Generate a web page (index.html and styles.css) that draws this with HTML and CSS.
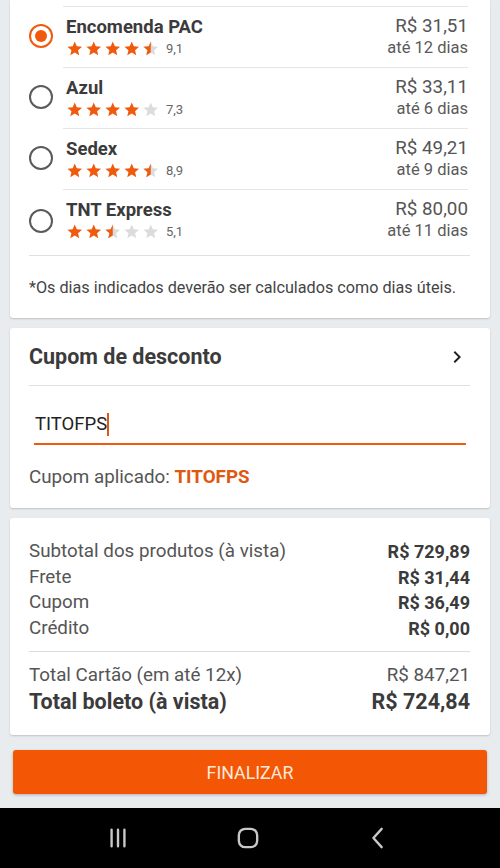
FILE: index.html
```html
<!DOCTYPE html>
<html lang="pt-BR">
<head>
<meta charset="utf-8">
<title>Checkout</title>
<link rel="stylesheet" href="styles.css">
</head>
<body>
<div class="page">
  <section class="card shipping">
    <div class="ship-row">
      <div class="radio-col"><span class="radio selected"></span></div>
      <div class="ship-body">
        <div class="ship-left">
          <div class="ship-name">Encomenda PAC</div>
          <div class="stars">
            <svg class="star" viewBox="0 0 24 24"><path class="on" d="M12 17.27L18.18 21l-1.64-7.03L22 9.24l-7.19-.61L12 2 9.19 8.63 2 9.24l5.46 4.73L5.82 21z"/></svg>
            <svg class="star" viewBox="0 0 24 24"><path class="on" d="M12 17.27L18.18 21l-1.64-7.03L22 9.24l-7.19-.61L12 2 9.19 8.63 2 9.24l5.46 4.73L5.82 21z"/></svg>
            <svg class="star" viewBox="0 0 24 24"><path class="on" d="M12 17.27L18.18 21l-1.64-7.03L22 9.24l-7.19-.61L12 2 9.19 8.63 2 9.24l5.46 4.73L5.82 21z"/></svg>
            <svg class="star" viewBox="0 0 24 24"><path class="on" d="M12 17.27L18.18 21l-1.64-7.03L22 9.24l-7.19-.61L12 2 9.19 8.63 2 9.24l5.46 4.73L5.82 21z"/></svg>
            <svg class="star" viewBox="0 0 24 24"><path class="off" d="M12 17.27L18.18 21l-1.64-7.03L22 9.24l-7.19-.61L12 2 9.19 8.63 2 9.24l5.46 4.73L5.82 21z"/><path class="on" d="M12 17.27L5.82 21l1.64-7.03L2 9.24l7.19-.61L12 2z"/></svg>
            <span class="score">9,1</span>
          </div>
        </div>
        <div class="ship-right">
          <div class="price">R$ 31,51</div>
          <div class="days">até 12 dias</div>
        </div>
      </div>
    </div>

    <div class="ship-row">
      <div class="radio-col"><span class="radio"></span></div>
      <div class="ship-body">
        <div class="ship-left">
          <div class="ship-name">Azul</div>
          <div class="stars">
            <svg class="star" viewBox="0 0 24 24"><path class="on" d="M12 17.27L18.18 21l-1.64-7.03L22 9.24l-7.19-.61L12 2 9.19 8.63 2 9.24l5.46 4.73L5.82 21z"/></svg>
            <svg class="star" viewBox="0 0 24 24"><path class="on" d="M12 17.27L18.18 21l-1.64-7.03L22 9.24l-7.19-.61L12 2 9.19 8.63 2 9.24l5.46 4.73L5.82 21z"/></svg>
            <svg class="star" viewBox="0 0 24 24"><path class="on" d="M12 17.27L18.18 21l-1.64-7.03L22 9.24l-7.19-.61L12 2 9.19 8.63 2 9.24l5.46 4.73L5.82 21z"/></svg>
            <svg class="star" viewBox="0 0 24 24"><path class="on" d="M12 17.27L18.18 21l-1.64-7.03L22 9.24l-7.19-.61L12 2 9.19 8.63 2 9.24l5.46 4.73L5.82 21z"/></svg>
            <svg class="star" viewBox="0 0 24 24"><path class="off" d="M12 17.27L18.18 21l-1.64-7.03L22 9.24l-7.19-.61L12 2 9.19 8.63 2 9.24l5.46 4.73L5.82 21z"/></svg>
            <span class="score">7,3</span>
          </div>
        </div>
        <div class="ship-right">
          <div class="price">R$ 33,11</div>
          <div class="days">até 6 dias</div>
        </div>
      </div>
    </div>

    <div class="ship-row">
      <div class="radio-col"><span class="radio"></span></div>
      <div class="ship-body">
        <div class="ship-left">
          <div class="ship-name">Sedex</div>
          <div class="stars">
            <svg class="star" viewBox="0 0 24 24"><path class="on" d="M12 17.27L18.18 21l-1.64-7.03L22 9.24l-7.19-.61L12 2 9.19 8.63 2 9.24l5.46 4.73L5.82 21z"/></svg>
            <svg class="star" viewBox="0 0 24 24"><path class="on" d="M12 17.27L18.18 21l-1.64-7.03L22 9.24l-7.19-.61L12 2 9.19 8.63 2 9.24l5.46 4.73L5.82 21z"/></svg>
            <svg class="star" viewBox="0 0 24 24"><path class="on" d="M12 17.27L18.18 21l-1.64-7.03L22 9.24l-7.19-.61L12 2 9.19 8.63 2 9.24l5.46 4.73L5.82 21z"/></svg>
            <svg class="star" viewBox="0 0 24 24"><path class="on" d="M12 17.27L18.18 21l-1.64-7.03L22 9.24l-7.19-.61L12 2 9.19 8.63 2 9.24l5.46 4.73L5.82 21z"/></svg>
            <svg class="star" viewBox="0 0 24 24"><path class="off" d="M12 17.27L18.18 21l-1.64-7.03L22 9.24l-7.19-.61L12 2 9.19 8.63 2 9.24l5.46 4.73L5.82 21z"/><path class="on" d="M12 17.27L5.82 21l1.64-7.03L2 9.24l7.19-.61L12 2z"/></svg>
            <span class="score">8,9</span>
          </div>
        </div>
        <div class="ship-right">
          <div class="price">R$ 49,21</div>
          <div class="days">até 9 dias</div>
        </div>
      </div>
    </div>

    <div class="ship-row last">
      <div class="radio-col"><span class="radio"></span></div>
      <div class="ship-body">
        <div class="ship-left">
          <div class="ship-name">TNT Express</div>
          <div class="stars">
            <svg class="star" viewBox="0 0 24 24"><path class="on" d="M12 17.27L18.18 21l-1.64-7.03L22 9.24l-7.19-.61L12 2 9.19 8.63 2 9.24l5.46 4.73L5.82 21z"/></svg>
            <svg class="star" viewBox="0 0 24 24"><path class="on" d="M12 17.27L18.18 21l-1.64-7.03L22 9.24l-7.19-.61L12 2 9.19 8.63 2 9.24l5.46 4.73L5.82 21z"/></svg>
            <svg class="star" viewBox="0 0 24 24"><path class="off" d="M12 17.27L18.18 21l-1.64-7.03L22 9.24l-7.19-.61L12 2 9.19 8.63 2 9.24l5.46 4.73L5.82 21z"/><path class="on" d="M12 17.27L5.82 21l1.64-7.03L2 9.24l7.19-.61L12 2z"/></svg>
            <svg class="star" viewBox="0 0 24 24"><path class="off" d="M12 17.27L18.18 21l-1.64-7.03L22 9.24l-7.19-.61L12 2 9.19 8.63 2 9.24l5.46 4.73L5.82 21z"/></svg>
            <svg class="star" viewBox="0 0 24 24"><path class="off" d="M12 17.27L18.18 21l-1.64-7.03L22 9.24l-7.19-.61L12 2 9.19 8.63 2 9.24l5.46 4.73L5.82 21z"/></svg>
            <span class="score">5,1</span>
          </div>
        </div>
        <div class="ship-right">
          <div class="price">R$ 80,00</div>
          <div class="days">até 11 dias</div>
        </div>
      </div>
    </div>

    <div class="divider"></div>
    <p class="note">*Os dias indicados deverão ser calculados como dias úteis.</p>
  </section>

  <section class="card coupon">
    <div class="coupon-head">
      <h2 class="coupon-title">Cupom de desconto</h2>
      <svg class="chevron" viewBox="0 0 24 24"><path d="M8.6 16.6L13.2 12 8.6 7.4 10 6l6 6-6 6z"/></svg>
    </div>
    <div class="coupon-field">
      <span class="coupon-value">TITOFPS</span><span class="caret"></span>
    </div>
    <p class="coupon-applied">Cupom aplicado: <strong>TITOFPS</strong></p>
  </section>

  <section class="card summary">
    <div class="sum-row"><span>Subtotal dos produtos (à vista)</span><b>R$ 729,89</b></div>
    <div class="sum-row"><span>Frete</span><b>R$ 31,44</b></div>
    <div class="sum-row"><span>Cupom</span><b>R$ 36,49</b></div>
    <div class="sum-row"><span>Crédito</span><b>R$ 0,00</b></div>
    <div class="sum-divider"></div>
    <div class="sum-row total-card"><span>Total Cartão (em até 12x)</span><span>R$ 847,21</span></div>
    <div class="sum-row total-boleto"><span>Total boleto (à vista)</span><span>R$ 724,84</span></div>
  </section>

  <button class="finish">FINALIZAR</button>
</div>

<nav class="navbar">
  <svg class="nav-icon" viewBox="0 0 24 24"><path d="M5 3v18M12 3v18M19 3v18"/></svg>
  <svg class="nav-icon" viewBox="0 0 24 24"><rect x="2" y="2" width="20" height="20" rx="7"/></svg>
  <svg class="nav-icon" viewBox="0 0 24 24"><path d="M16 2L7 12l9 10"/></svg>
</nav>
</body>
</html>
```

FILE: styles.css
```css
* { box-sizing: border-box; }

html, body {
  margin: 0;
  padding: 0;
  height: 100%;
}

body {
  background: #e9ecef;
  font-family: Roboto, "Noto Sans", sans-serif;
  color: #3b3b3b;
  display: flex;
  flex-direction: column;
}

.page {
  flex: 1;
  padding: 0 10px;
  display: flex;
  flex-direction: column;
}

.card {
  background: #fff;
  border-radius: 0 0 3px 3px;
  box-shadow: 0 1px 2px rgba(0, 0, 0, 0.18);
}

/* Shipping list */
.shipping {
  padding: 6px 22px 20px 19px;
  margin-bottom: 10px;
}

.ship-row {
  display: flex;
}

.radio-col {
  width: 34px;
  display: flex;
  align-items: center;
  padding-bottom: 2px;
}

.radio {
  width: 24px;
  height: 24px;
  border: 2px solid #5a5a5a;
  border-radius: 50%;
  display: flex;
  align-items: center;
  justify-content: center;
}

.radio.selected {
  border-color: #f05a0c;
}

.radio.selected::after {
  content: "";
  width: 12px;
  height: 12px;
  border-radius: 50%;
  background: #f05a0c;
}

.ship-body {
  flex: 1;
  display: flex;
  justify-content: space-between;
  border-top: 1px solid #e6e6e6;
  padding: 8px 0 9px 3px;
}

.ship-name {
  font-size: 18.5px;
  font-weight: 700;
  line-height: 24px;
  color: #3b3b3b;
}

.stars {
  display: flex;
  align-items: center;
  height: 19px;
}

.star {
  width: 17.5px;
  height: 17.5px;
  margin-right: 1.5px;
}

.star .on { fill: #f05a0c; }
.star .off { fill: #dcdcdc; }

.score {
  font-size: 13px;
  color: #666;
  margin-left: 5px;
}

.ship-right {
  text-align: right;
}

.price {
  font-size: 18.8px;
  line-height: 23px;
  color: #555;
}

.days {
  font-size: 16.5px;
  line-height: 20px;
  color: #5a5a5a;
}

.ship-row.last .ship-body {
  padding-bottom: 14px;
}

.divider {
  height: 1px;
  background: #e0e0e0;
  margin-right: -2px;
}

.note {
  margin: 22px 0 0;
  font-size: 16.2px;
  line-height: 20px;
  color: #444;
}

/* Coupon */
.coupon {
  border-radius: 3px;
  padding: 15px 20px 20px 19px;
  margin-bottom: 10px;
}

.coupon-head {
  display: flex;
  align-items: center;
  justify-content: space-between;
  padding-bottom: 14px;
  border-bottom: 1px solid #e0e0e0;
}

.coupon-title {
  margin: 0;
  font-size: 21.5px;
  line-height: 28px;
  font-weight: 700;
  color: #3b3b3b;
}

.chevron {
  width: 24px;
  height: 24px;
  fill: #222;
  margin-right: 1px;
}

.coupon-field {
  margin: 26px 4px 0 5px;
  padding: 0 0 7px 1px;
  border-bottom: 2px solid #f05a0c;
  display: flex;
  align-items: center;
  height: 33px;
}

.coupon-value {
  font-size: 18.5px;
  line-height: 24px;
  color: #222;
}

.caret {
  width: 2px;
  height: 23px;
  background: #e0580f;
}

.coupon-applied {
  margin: 21px 0 0;
  font-size: 18.8px;
  line-height: 22px;
  color: #555;
}

.coupon-applied strong {
  color: #e0580f;
  font-weight: 700;
}

/* Summary */
.summary {
  border-radius: 3px;
  padding: 21px 20px 19px 19px;
}

.sum-row {
  display: flex;
  justify-content: space-between;
  font-size: 18.8px;
  line-height: 25.5px;
  color: #555;
}

.sum-row b {
  color: #3b3b3b;
  font-weight: 700;
  font-size: 18px;
}

.sum-divider {
  height: 1px;
  background: #dcdcdc;
  margin: 10px 0 10px;
}

.total-card {
  line-height: 26px;
}

.total-boleto {
  font-size: 21.5px;
  font-weight: 700;
  line-height: 28px;
  color: #3b3b3b;
}

/* Button */
.finish {
  margin: 15px 3px 14px;
  height: 44px;
  border: none;
  border-radius: 3px;
  background: #f35605;
  color: #fde9dc;
  font-family: Roboto, "Noto Sans", sans-serif;
  font-size: 17.8px;
  box-shadow: 0 1px 3px rgba(0, 0, 0, 0.25);
}

/* Android nav bar */
.navbar {
  height: 60px;
  background: #000;
  display: flex;
  align-items: center;
  justify-content: center;
  gap: 108px;
  padding-right: 4px;
}

.nav-icon {
  width: 22px;
  height: 22px;
  fill: none;
  stroke: #c8c8c8;
  stroke-width: 2.6;
  stroke-linecap: round;
  stroke-linejoin: round;
}
```
